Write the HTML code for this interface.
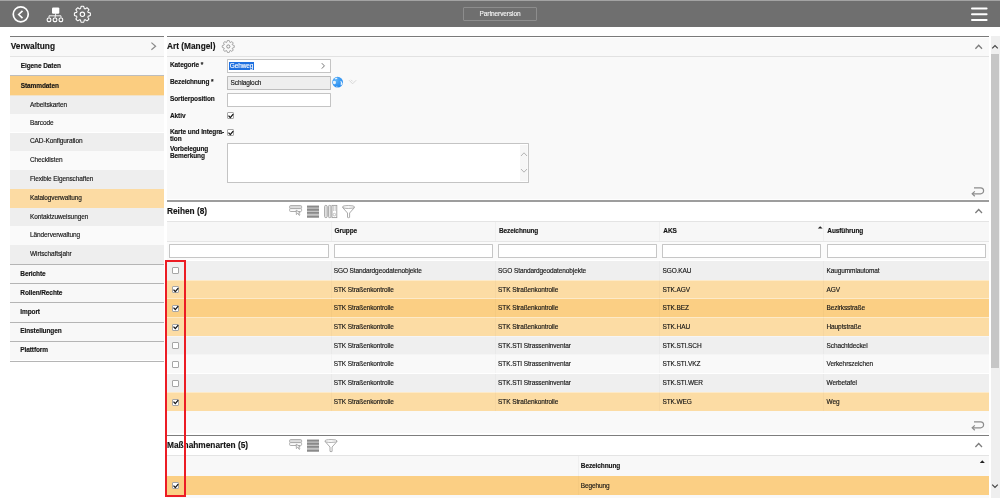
<!DOCTYPE html>
<html><head><meta charset="utf-8">
<style>
*{margin:0;padding:0;box-sizing:border-box}
html,body{width:1000px;height:498px;overflow:hidden;background:#fff;font-family:"Liberation Sans",sans-serif;color:#151515}
div,span,svg{position:absolute}
.t{white-space:nowrap;font-size:6.5px;letter-spacing:-0.1px;-webkit-text-stroke:0.14px currentColor}
.b{font-weight:bold}
.nr{left:10px;width:154px}
.inp{background:#fff;border:1px solid #c4c4c4;border-radius:0.6px}
.cb{width:7px;height:7px;border:1px solid #a6a6a6;background:#fff;border-radius:1px}
.hl{background:#7d7d7d}
</style></head><body><div id="root" style="left:0;top:0;width:1000px;height:498px;will-change:transform">
<!-- ============ top bar ============ -->
<div style="left:0;top:0;width:1000px;height:1px;background:#a3a3a3"></div>
<div style="left:0;top:1px;width:1000px;height:25.5px;background:#6f6f6f"></div>
<svg style="left:0;top:0" width="100" height="27" viewBox="0 0 100 27">
  <circle cx="20.75" cy="14.3" r="7.5" fill="none" stroke="#fff" stroke-width="1.7"/>
  <path d="M22.5 10.9 L18.7 14.5 L22.5 18.1" fill="none" stroke="#fff" stroke-width="1.6"/>
  <rect x="52" y="7.4" width="7.3" height="6.3" rx="1.2" fill="#fff"/>
  <path d="M55.6 13.5 V15.8 M49 17.5 V15.8 H61 V17.5 M55.2 15.8 V17.5" fill="none" stroke="#fff" stroke-width="0.9"/>
  <rect x="47.2" y="18" width="3.6" height="3.6" rx="1.3" fill="none" stroke="#fff" stroke-width="1.1"/>
  <rect x="53.2" y="18" width="3.6" height="3.6" rx="1.3" fill="none" stroke="#fff" stroke-width="1.1"/>
  <rect x="59.1" y="18" width="3.6" height="3.6" rx="1.3" fill="none" stroke="#fff" stroke-width="1.1"/>
  <path d="M82.40 6.30 L82.60 6.30 L82.79 6.31 L82.99 6.32 L83.18 6.34 L83.38 6.36 L83.57 6.39 L83.74 6.57 L83.87 6.93 L83.97 7.30 L84.07 7.65 L84.15 7.97 L84.23 8.26 L84.31 8.51 L84.42 8.65 L84.56 8.70 L84.70 8.76 L84.83 8.81 L84.97 8.88 L85.14 8.85 L85.37 8.74 L85.64 8.59 L85.93 8.42 L86.24 8.24 L86.57 8.06 L86.92 7.89 L87.17 7.87 L87.32 7.99 L87.48 8.12 L87.63 8.24 L87.77 8.37 L87.92 8.51 L88.06 8.64 L88.19 8.78 L88.33 8.93 L88.46 9.07 L88.58 9.22 L88.71 9.38 L88.83 9.53 L88.81 9.78 L88.64 10.13 L88.46 10.46 L88.28 10.77 L88.11 11.06 L87.96 11.33 L87.85 11.56 L87.82 11.73 L87.89 11.87 L87.94 12.00 L88.00 12.14 L88.05 12.28 L88.19 12.39 L88.44 12.47 L88.73 12.55 L89.05 12.63 L89.40 12.73 L89.77 12.83 L90.13 12.96 L90.31 13.13 L90.34 13.32 L90.36 13.52 L90.38 13.71 L90.39 13.91 L90.40 14.10 L90.40 14.30 L90.40 14.50 L90.39 14.69 L90.38 14.89 L90.36 15.08 L90.34 15.28 L90.31 15.47 L90.13 15.64 L89.77 15.77 L89.40 15.87 L89.05 15.97 L88.73 16.05 L88.44 16.13 L88.19 16.21 L88.05 16.32 L88.00 16.46 L87.94 16.60 L87.89 16.73 L87.82 16.87 L87.85 17.04 L87.96 17.27 L88.11 17.54 L88.28 17.83 L88.46 18.14 L88.64 18.47 L88.81 18.82 L88.83 19.07 L88.71 19.22 L88.58 19.38 L88.46 19.53 L88.33 19.67 L88.19 19.82 L88.06 19.96 L87.92 20.09 L87.77 20.23 L87.63 20.36 L87.48 20.48 L87.32 20.61 L87.17 20.73 L86.92 20.71 L86.57 20.54 L86.24 20.36 L85.93 20.18 L85.64 20.01 L85.37 19.86 L85.14 19.75 L84.97 19.72 L84.83 19.79 L84.70 19.84 L84.56 19.90 L84.42 19.95 L84.31 20.09 L84.23 20.34 L84.15 20.63 L84.07 20.95 L83.97 21.30 L83.87 21.67 L83.74 22.03 L83.57 22.21 L83.38 22.24 L83.18 22.26 L82.99 22.28 L82.79 22.29 L82.60 22.30 L82.40 22.30 L82.20 22.30 L82.01 22.29 L81.81 22.28 L81.62 22.26 L81.42 22.24 L81.23 22.21 L81.06 22.03 L80.93 21.67 L80.83 21.30 L80.73 20.95 L80.65 20.63 L80.57 20.34 L80.49 20.09 L80.38 19.95 L80.24 19.90 L80.10 19.84 L79.97 19.79 L79.83 19.72 L79.66 19.75 L79.43 19.86 L79.16 20.01 L78.87 20.18 L78.56 20.36 L78.23 20.54 L77.88 20.71 L77.63 20.73 L77.48 20.61 L77.32 20.48 L77.17 20.36 L77.03 20.23 L76.88 20.09 L76.74 19.96 L76.61 19.82 L76.47 19.67 L76.34 19.53 L76.22 19.38 L76.09 19.22 L75.97 19.07 L75.99 18.82 L76.16 18.47 L76.34 18.14 L76.52 17.83 L76.69 17.54 L76.84 17.27 L76.95 17.04 L76.98 16.87 L76.91 16.73 L76.86 16.60 L76.80 16.46 L76.75 16.32 L76.61 16.21 L76.36 16.13 L76.07 16.05 L75.75 15.97 L75.40 15.87 L75.03 15.77 L74.67 15.64 L74.49 15.47 L74.46 15.28 L74.44 15.08 L74.42 14.89 L74.41 14.69 L74.40 14.50 L74.40 14.30 L74.40 14.10 L74.41 13.91 L74.42 13.71 L74.44 13.52 L74.46 13.32 L74.49 13.13 L74.67 12.96 L75.03 12.83 L75.40 12.73 L75.75 12.63 L76.07 12.55 L76.36 12.47 L76.61 12.39 L76.75 12.28 L76.80 12.14 L76.86 12.00 L76.91 11.87 L76.98 11.73 L76.95 11.56 L76.84 11.33 L76.69 11.06 L76.52 10.77 L76.34 10.46 L76.16 10.13 L75.99 9.78 L75.97 9.53 L76.09 9.38 L76.22 9.22 L76.34 9.07 L76.47 8.93 L76.61 8.78 L76.74 8.64 L76.88 8.51 L77.03 8.37 L77.17 8.24 L77.32 8.12 L77.48 7.99 L77.63 7.87 L77.88 7.89 L78.23 8.06 L78.56 8.24 L78.87 8.42 L79.16 8.59 L79.43 8.74 L79.66 8.85 L79.83 8.88 L79.97 8.81 L80.10 8.76 L80.24 8.70 L80.38 8.65 L80.49 8.51 L80.57 8.26 L80.65 7.97 L80.73 7.65 L80.83 7.30 L80.93 6.93 L81.06 6.57 L81.23 6.39 L81.42 6.36 L81.62 6.34 L81.81 6.32 L82.01 6.31 L82.20 6.30Z" fill="none" stroke="#fff" stroke-width="1.1"/><circle cx="82.4" cy="14.3" r="2.2" fill="none" stroke="#fff" stroke-width="1.1"/>
</svg>
<div class="t" style="left:463px;top:7.2px;width:74px;height:13.5px;border:1px solid #8d8d8d;border-radius:1px;color:#f4f4f4;text-align:center;line-height:11.5px">Partnerversion</div>
<svg style="left:960px;top:0" width="40" height="27">
  <path d="M12 8.5 H26.6 M12 14.3 H26.6 M12 20.1 H26.6" stroke="#fff" stroke-width="2" stroke-linecap="round"/>
</svg>

<!-- ============ left nav ============ -->
<div class="nr" style="top:36px;height:1px;background:#7a7a7a"></div>
<div class="nr" style="top:37px;height:19.5px;background:#f8f8f8;border-bottom:1px solid #e3e3e3"></div>
<div class="t b" style="left:10.7px;top:38px;font-size:8.3px;letter-spacing:0;line-height:17px">Verwaltung</div>
<svg style="left:148px;top:40px" width="12" height="12"><path d="M3.4 2.6 L7.6 6.2 L3.4 9.8" fill="none" stroke="#8a8a8a" stroke-width="1.2"/></svg>

<div class="nr" style="top:56.5px;height:19px;background:#fafafa"></div>
<div class="t b" style="left:20.8px;top:56px;line-height:19px">Eigene Daten</div>
<div class="nr" style="top:75px;height:21px;background:#fbcd80;border-top:1px solid #bdbdbd;border-bottom:1px solid #f2e2c6"></div>
<div class="t b" style="left:20.8px;top:75.5px;line-height:20px">Stammdaten</div>

<div class="nr" style="top:96px;height:17.6px;background:#eeeeee"></div>
<div class="t" style="left:30px;top:95.5px;line-height:18.8px">Arbeitskarten</div>
<div class="nr" style="top:113.6px;height:18.9px;background:#fafafa"></div>
<div class="t" style="left:30px;top:113.6px;line-height:18.8px">Barcode</div>
<div class="nr" style="top:132.5px;height:18.7px;background:#eeeeee"></div>
<div class="t" style="left:30px;top:132.4px;line-height:18.8px">CAD-Konfiguration</div>
<div class="nr" style="top:151.2px;height:18.8px;background:#fafafa"></div>
<div class="t" style="left:30px;top:151.2px;line-height:18.8px">Checklisten</div>
<div class="nr" style="top:170px;height:18.8px;background:#eeeeee"></div>
<div class="t" style="left:30px;top:170px;line-height:18.8px">Flexible Eigenschaften</div>
<div class="nr" style="top:188.8px;height:18.8px;background:#fcdba3"></div>
<div class="t" style="left:30px;top:188.8px;line-height:18.8px">Katalogverwaltung</div>
<div class="nr" style="top:207.6px;height:18.6px;background:#eeeeee"></div>
<div class="t" style="left:30px;top:207.6px;line-height:18.8px">Kontaktzuweisungen</div>
<div class="nr" style="top:226.2px;height:18.6px;background:#fafafa"></div>
<div class="t" style="left:30px;top:226.2px;line-height:18.8px">Länderverwaltung</div>
<div class="nr" style="top:244.8px;height:19.2px;background:#eeeeee"></div>
<div class="t" style="left:30px;top:244.8px;line-height:18.8px">Wirtschaftsjahr</div>

<div class="nr" style="top:264px;height:1px;background:#b5b5b5"></div>
<div class="nr" style="top:265px;height:18.2px;background:#f8f8f8"></div>
<div class="t b" style="left:20.3px;top:264.5px;line-height:18.8px">Berichte</div>
<div class="nr" style="top:283.2px;height:1px;background:#b5b5b5"></div>
<div class="nr" style="top:284.2px;height:18.2px;background:#f8f8f8"></div>
<div class="t b" style="left:20.3px;top:283.6px;line-height:18.8px">Rollen/Rechte</div>
<div class="nr" style="top:302.4px;height:1px;background:#b5b5b5"></div>
<div class="nr" style="top:303.4px;height:18.9px;background:#f8f8f8"></div>
<div class="t b" style="left:20.3px;top:303px;line-height:18.8px">Import</div>
<div class="nr" style="top:322.3px;height:1px;background:#b5b5b5"></div>
<div class="nr" style="top:323.3px;height:18px;background:#f8f8f8"></div>
<div class="t b" style="left:20.3px;top:322px;line-height:18.8px">Einstellungen</div>
<div class="nr" style="top:341.3px;height:1px;background:#b5b5b5"></div>
<div class="nr" style="top:342.3px;height:18.2px;background:#f8f8f8"></div>
<div class="t b" style="left:20.3px;top:341.4px;line-height:18.8px">Plattform</div>
<div class="nr" style="top:360.5px;height:1px;background:#b5b5b5"></div>

<!-- ============ right: Art (Mangel) ============ -->
<div style="left:167px;top:36px;width:822px;height:1px;background:#7a7a7a"></div>
<div style="left:167px;top:37.6px;width:822px;height:161.4px;background:#f9f9f9"></div>
<div style="left:167px;top:55.6px;width:822px;height:1px;background:#e2e2e2"></div>
<div class="t b" style="left:167px;top:38px;font-size:8.3px;letter-spacing:0;line-height:17px">Art (Mangel)</div>
<svg style="left:215px;top:35px" width="30" height="25"><path d="M13.30 5.50 L13.45 5.50 L13.59 5.51 L13.74 5.52 L13.89 5.53 L14.03 5.55 L14.18 5.56 L14.31 5.71 L14.40 5.98 L14.48 6.25 L14.55 6.51 L14.61 6.75 L14.67 6.97 L14.73 7.16 L14.82 7.26 L14.92 7.30 L15.02 7.34 L15.12 7.39 L15.22 7.43 L15.36 7.42 L15.53 7.33 L15.73 7.22 L15.94 7.09 L16.18 6.95 L16.43 6.82 L16.69 6.69 L16.87 6.68 L16.99 6.77 L17.11 6.86 L17.22 6.96 L17.33 7.05 L17.44 7.15 L17.54 7.26 L17.65 7.36 L17.75 7.47 L17.84 7.58 L17.94 7.69 L18.03 7.81 L18.12 7.93 L18.11 8.11 L17.98 8.37 L17.85 8.62 L17.71 8.86 L17.58 9.07 L17.47 9.27 L17.38 9.44 L17.37 9.58 L17.41 9.68 L17.46 9.78 L17.50 9.88 L17.54 9.98 L17.64 10.07 L17.83 10.13 L18.05 10.19 L18.29 10.25 L18.55 10.32 L18.82 10.40 L19.09 10.49 L19.24 10.62 L19.25 10.77 L19.27 10.91 L19.28 11.06 L19.29 11.21 L19.30 11.35 L19.30 11.50 L19.30 11.65 L19.29 11.79 L19.28 11.94 L19.27 12.09 L19.25 12.23 L19.24 12.38 L19.09 12.51 L18.82 12.60 L18.55 12.68 L18.29 12.75 L18.05 12.81 L17.83 12.87 L17.64 12.93 L17.54 13.02 L17.50 13.12 L17.46 13.22 L17.41 13.32 L17.37 13.42 L17.38 13.56 L17.47 13.73 L17.58 13.93 L17.71 14.14 L17.85 14.38 L17.98 14.63 L18.11 14.89 L18.12 15.07 L18.03 15.19 L17.94 15.31 L17.84 15.42 L17.75 15.53 L17.65 15.64 L17.54 15.74 L17.44 15.85 L17.33 15.95 L17.22 16.04 L17.11 16.14 L16.99 16.23 L16.87 16.32 L16.69 16.31 L16.43 16.18 L16.18 16.05 L15.94 15.91 L15.73 15.78 L15.53 15.67 L15.36 15.58 L15.22 15.57 L15.12 15.61 L15.02 15.66 L14.92 15.70 L14.82 15.74 L14.73 15.84 L14.67 16.03 L14.61 16.25 L14.55 16.49 L14.48 16.75 L14.40 17.02 L14.31 17.29 L14.18 17.44 L14.03 17.45 L13.89 17.47 L13.74 17.48 L13.59 17.49 L13.45 17.50 L13.30 17.50 L13.15 17.50 L13.01 17.49 L12.86 17.48 L12.71 17.47 L12.57 17.45 L12.42 17.44 L12.29 17.29 L12.20 17.02 L12.12 16.75 L12.05 16.49 L11.99 16.25 L11.93 16.03 L11.87 15.84 L11.78 15.74 L11.68 15.70 L11.58 15.66 L11.48 15.61 L11.38 15.57 L11.24 15.58 L11.07 15.67 L10.87 15.78 L10.66 15.91 L10.42 16.05 L10.17 16.18 L9.91 16.31 L9.73 16.32 L9.61 16.23 L9.49 16.14 L9.38 16.04 L9.27 15.95 L9.16 15.85 L9.06 15.74 L8.95 15.64 L8.85 15.53 L8.76 15.42 L8.66 15.31 L8.57 15.19 L8.48 15.07 L8.49 14.89 L8.62 14.63 L8.75 14.38 L8.89 14.14 L9.02 13.93 L9.13 13.73 L9.22 13.56 L9.23 13.42 L9.19 13.32 L9.14 13.22 L9.10 13.12 L9.06 13.02 L8.96 12.93 L8.77 12.87 L8.55 12.81 L8.31 12.75 L8.05 12.68 L7.78 12.60 L7.51 12.51 L7.36 12.38 L7.35 12.23 L7.33 12.09 L7.32 11.94 L7.31 11.79 L7.30 11.65 L7.30 11.50 L7.30 11.35 L7.31 11.21 L7.32 11.06 L7.33 10.91 L7.35 10.77 L7.36 10.62 L7.51 10.49 L7.78 10.40 L8.05 10.32 L8.31 10.25 L8.55 10.19 L8.77 10.13 L8.96 10.07 L9.06 9.98 L9.10 9.88 L9.14 9.78 L9.19 9.68 L9.23 9.58 L9.22 9.44 L9.13 9.27 L9.02 9.07 L8.89 8.86 L8.75 8.62 L8.62 8.37 L8.49 8.11 L8.48 7.93 L8.57 7.81 L8.66 7.69 L8.76 7.58 L8.85 7.47 L8.95 7.36 L9.06 7.26 L9.16 7.15 L9.27 7.05 L9.38 6.96 L9.49 6.86 L9.61 6.77 L9.73 6.68 L9.91 6.69 L10.17 6.82 L10.42 6.95 L10.66 7.09 L10.87 7.22 L11.07 7.33 L11.24 7.42 L11.38 7.43 L11.48 7.39 L11.58 7.34 L11.68 7.30 L11.78 7.26 L11.87 7.16 L11.93 6.97 L11.99 6.75 L12.05 6.51 L12.12 6.25 L12.20 5.98 L12.29 5.71 L12.42 5.56 L12.57 5.55 L12.71 5.53 L12.86 5.52 L13.01 5.51 L13.15 5.50Z" fill="none" stroke="#8a8a8a" stroke-width="0.9"/><circle cx="13.3" cy="11.5" r="1.6" fill="none" stroke="#8a8a8a" stroke-width="0.9"/></svg>
<svg style="left:965px;top:38px" width="24" height="18"><path d="M10.4 10.8 L13.7 7.3 L17 10.8" fill="none" stroke="#7c7c7c" stroke-width="1.3"/></svg>

<div class="t b" style="left:170px;top:61px;line-height:8px">Kategorie *</div>
<div class="inp" style="left:227px;top:59px;width:104.3px;height:13.8px"></div>
<div class="t" style="left:229.4px;top:61.9px;height:8px;line-height:8px;background:#1f70e0;color:#fff;padding:0 0.3px">Gehweg</div>
<svg style="left:318px;top:60px" width="10" height="12"><path d="M3.8 3.2 L6.4 5.9 L3.8 8.6" fill="none" stroke="#666" stroke-width="0.9"/></svg>

<div class="t b" style="left:170px;top:78px;line-height:8px">Bezeichnung *</div>
<div class="inp" style="left:227px;top:76px;width:104.3px;height:13.8px;background:#eeeeee;border-color:#bdbdbd"></div>
<div class="t" style="left:230.5px;top:78.8px;line-height:8px">Schlagloch</div>
<svg style="left:330px;top:74px" width="30" height="16">
  <defs><radialGradient id="gb" cx="0.35" cy="0.3" r="0.8"><stop offset="0" stop-color="#5cb2f8"/><stop offset="1" stop-color="#1d85ee"/></radialGradient></defs>
  <circle cx="7.6" cy="8.2" r="5.4" fill="url(#gb)"/>
  <path d="M2.9 7.2 Q4.6 6.4 5.9 7.4 Q6.4 9.2 5 10.3 Q3.4 10.4 2.8 9.2Z M4.6 4.6 Q6 3.6 7.6 3.9 Q7.2 5 5.6 5.6Z M10.6 6.8 Q12.2 7.6 12.6 9.4 Q12 11 10.8 11.6 Q10.4 10 10.9 8.8 Q10.2 8 10.6 6.8Z M6.4 12.2 Q7.4 12.8 8.2 13.2 Q6.8 13.4 6.2 12.8Z" fill="#e6f2fd"/>
  <path d="M19 6.2 L22.6 9.8 L26.2 6.2 M21 5.8 L22.6 7.4" fill="none" stroke="#d4d4d4" stroke-width="0.9"/>
</svg>

<div class="t b" style="left:170px;top:95px;line-height:8px">Sortierposition</div>
<div class="inp" style="left:227px;top:93px;width:104.3px;height:13.8px"></div>

<div class="t b" style="left:170px;top:111.5px;line-height:8px">Aktiv</div>
<div class="cb" style="left:227.1px;top:112.3px"></div>
<svg style="left:225.8px;top:110.7px" width="10" height="10"><path d="M2.5 4.6 L4.3 6.6 L7.2 3.1" fill="none" stroke="#151515" stroke-width="1.3"/></svg>

<div class="t b" style="left:170px;top:128px;line-height:7px">Karte und Integra-<br>tion</div>
<div class="cb" style="left:227.3px;top:129.3px"></div>
<svg style="left:226px;top:127.7px" width="10" height="10"><path d="M2.5 4.6 L4.3 6.6 L7.2 3.1" fill="none" stroke="#151515" stroke-width="1.3"/></svg>

<div class="t b" style="left:170px;top:145px;line-height:7px">Vorbelegung<br>Bemerkung</div>
<div class="inp" style="left:227px;top:143px;width:302px;height:40px"></div>
<svg style="left:518px;top:144px" width="13" height="38">
  <rect x="2" y="1" width="7.6" height="36" fill="#f6f6f6"/>
  <path d="M3 12 L6 8.8 L9 12 M3 25 L6 28.2 L9 25" fill="none" stroke="#b4b4b4" stroke-width="1"/>
</svg>
<svg style="left:968px;top:184px" width="20" height="16">
  <path d="M6 3.8 H12.6 A3 3 0 0 1 12.6 9.8 H5" fill="none" stroke="#8c8c8c" stroke-width="1.2"/>
  <path d="M6.8 7.4 L4.2 9.8 L6.8 12.2" fill="none" stroke="#8c8c8c" stroke-width="1.2"/>
</svg>

<!-- ============ Reihen ============ -->
<div style="left:167px;top:200px;width:822px;height:2px;background:#9d9d9d"></div>
<div style="left:167px;top:202px;width:822px;height:19px;background:#ffffff"></div>
<div style="left:167px;top:221px;width:822px;height:1px;background:#e4e4e4"></div>
<div class="t b" style="left:167px;top:202.5px;font-size:8.3px;letter-spacing:0;line-height:17px">Reihen (8)</div>
<svg style="left:965px;top:202px" width="24" height="18"><path d="M10.4 11 L13.7 7.5 L17 11" fill="none" stroke="#7c7c7c" stroke-width="1.3"/></svg>
<svg style="left:285px;top:202px" width="75" height="18">
  <rect x="4.6" y="3.6" width="12" height="3" rx="1" fill="#dedede" stroke="#a3a3a3" stroke-width="0.9"/>
  <rect x="4.6" y="6.6" width="12" height="2.9" rx="1" fill="#fafafa" stroke="#a3a3a3" stroke-width="0.9"/>
  <path d="M11.2 8.2 L11.4 12.6 L12.6 11.4 L14.2 13.4 L15 12.8 L13.6 11 L15.2 10.6Z" fill="#f4f4f4" stroke="#9a9a9a" stroke-width="0.8"/>
  <rect x="22" y="3.5" width="12" height="12.4" fill="#c4c4c4"/>
  <path d="M22 4.6 H34 M22 7.8 H34 M22 10.9 H34 M22 14.6 H34" stroke="#8a8a8a" stroke-width="1.9"/>
  <rect x="39.6" y="3.4" width="2.6" height="12.2" rx="1.1" fill="#e6e6e6" stroke="#9e9e9e" stroke-width="0.9"/>
  <rect x="43.4" y="3.4" width="2.6" height="12.2" rx="1.1" fill="#e6e6e6" stroke="#9e9e9e" stroke-width="0.9"/>
  <rect x="47" y="3.4" width="4.8" height="12.2" fill="none" stroke="#9e9e9e" stroke-width="0.9"/>
  <path d="M48.6 3.6 V9 M50.2 3.6 V9" stroke="#b8b8b8" stroke-width="0.7"/>
  <circle cx="49.4" cy="12.6" r="1.3" fill="none" stroke="#aaaaaa" stroke-width="0.7"/>
  <path d="M57.5 5 Q57.5 3.6 63.6 3.6 Q69.6 3.6 69.6 5 Q69.6 6.4 63.6 6.4 Q57.5 6.4 57.5 5Z M57.5 5.4 L62.5 11 V15.4 Q63.6 16 64.6 15.4 V11 L69.6 5.4" fill="none" stroke="#a0a0a0" stroke-width="0.9"/>
</svg>

<div id="grid"></div>
<div style="left:167px;top:222px;width:821.7px;height:18.8px;background:#f7f7f7"></div>
<div style="left:167px;top:240.8px;width:821.7px;height:1px;background:#e6e6e6"></div>
<div style="left:330.5px;top:222px;width:0.6px;height:18.8px;background:#efefef"></div>
<div style="left:494.9px;top:222px;width:0.6px;height:18.8px;background:#efefef"></div>
<div style="left:659.3px;top:222px;width:0.6px;height:18.8px;background:#efefef"></div>
<div style="left:823.3px;top:222px;width:0.6px;height:18.8px;background:#efefef"></div>
<div class="t b" style="left:334.5px;top:222px;line-height:18.8px">Gruppe</div>
<div class="t b" style="left:498.9px;top:222px;line-height:18.8px">Bezeichnung</div>
<div class="t b" style="left:663.3px;top:222px;line-height:18.8px">AKS</div>
<div class="t b" style="left:827.3px;top:222px;line-height:18.8px">Ausführung</div>
<svg style="left:816px;top:224px" width="8" height="6"><path d="M1.8 4.4 L4.2 2.2 L6.6 4.4Z" fill="#222"/></svg>
<div style="left:167px;top:241.8px;width:821.7px;height:18.7px;background:#fbfbfb"></div>
<div class="inp" style="left:169px;top:244.1px;width:159.60000000000002px;height:13.7px;border-color:#c6c6c6"></div>
<div class="inp" style="left:334px;top:244.1px;width:158.5px;height:13.7px;border-color:#c6c6c6"></div>
<div class="inp" style="left:498.1px;top:244.1px;width:159.0px;height:13.7px;border-color:#c6c6c6"></div>
<div class="inp" style="left:662.3px;top:244.1px;width:159.0px;height:13.7px;border-color:#c6c6c6"></div>
<div class="inp" style="left:826.5px;top:244.1px;width:159.20000000000005px;height:13.7px;border-color:#c6c6c6"></div>
<div style="left:167px;top:260.50px;width:821.7px;height:19.5px;background:#efefef"></div>
<div style="left:330.5px;top:260.50px;width:0.6px;height:19.5px;background:rgba(0,0,0,0.025)"></div>
<div style="left:494.9px;top:260.50px;width:0.6px;height:19.5px;background:rgba(0,0,0,0.025)"></div>
<div style="left:659.3px;top:260.50px;width:0.6px;height:19.5px;background:rgba(0,0,0,0.025)"></div>
<div style="left:823.3px;top:260.50px;width:0.6px;height:19.5px;background:rgba(0,0,0,0.025)"></div>
<div class="cb" style="left:172px;top:267.00px"></div>
<div class="t" style="left:333.7px;top:261.10px;line-height:19.5px">SGO Standardgeodatenobjekte</div>
<div class="t" style="left:498.09999999999997px;top:261.10px;line-height:19.5px">SGO Standardgeodatenobjekte</div>
<div class="t" style="left:662.5px;top:261.10px;line-height:19.5px">SGO.KAU</div>
<div class="t" style="left:826.5px;top:261.10px;line-height:19.5px">Kaugummiautomat</div>
<div style="left:167px;top:280.00px;width:821.7px;height:18.7px;background:#fcdca4"></div>
<div style="left:167px;top:279.50px;width:821.7px;height:1px;background:rgba(255,255,255,0.4)"></div>
<div style="left:330.5px;top:280.00px;width:0.6px;height:18.7px;background:rgba(0,0,0,0.025)"></div>
<div style="left:494.9px;top:280.00px;width:0.6px;height:18.7px;background:rgba(0,0,0,0.025)"></div>
<div style="left:659.3px;top:280.00px;width:0.6px;height:18.7px;background:rgba(0,0,0,0.025)"></div>
<div style="left:823.3px;top:280.00px;width:0.6px;height:18.7px;background:rgba(0,0,0,0.025)"></div>
<div class="cb" style="left:172px;top:286.30px"></div>
<svg style="left:170.7px;top:284.70px" width="10" height="10"><path d="M2.5 4.6 L4.3 6.6 L7.2 3.1" fill="none" stroke="#151515" stroke-width="1.3"/></svg>
<div class="t" style="left:333.7px;top:280.60px;line-height:18.7px">STK Straßenkontrolle</div>
<div class="t" style="left:498.09999999999997px;top:280.60px;line-height:18.7px">STK Straßenkontrolle</div>
<div class="t" style="left:662.5px;top:280.60px;line-height:18.7px">STK.AGV</div>
<div class="t" style="left:826.5px;top:280.60px;line-height:18.7px">AGV</div>
<div style="left:167px;top:298.70px;width:821.7px;height:18.7px;background:#fbcf84"></div>
<div style="left:167px;top:298.20px;width:821.7px;height:1px;background:rgba(255,255,255,0.4)"></div>
<div style="left:330.5px;top:298.70px;width:0.6px;height:18.7px;background:rgba(0,0,0,0.025)"></div>
<div style="left:494.9px;top:298.70px;width:0.6px;height:18.7px;background:rgba(0,0,0,0.025)"></div>
<div style="left:659.3px;top:298.70px;width:0.6px;height:18.7px;background:rgba(0,0,0,0.025)"></div>
<div style="left:823.3px;top:298.70px;width:0.6px;height:18.7px;background:rgba(0,0,0,0.025)"></div>
<div class="cb" style="left:172px;top:305.00px"></div>
<svg style="left:170.7px;top:303.40px" width="10" height="10"><path d="M2.5 4.6 L4.3 6.6 L7.2 3.1" fill="none" stroke="#151515" stroke-width="1.3"/></svg>
<div class="t" style="left:333.7px;top:299.30px;line-height:18.7px">STK Straßenkontrolle</div>
<div class="t" style="left:498.09999999999997px;top:299.30px;line-height:18.7px">STK Straßenkontrolle</div>
<div class="t" style="left:662.5px;top:299.30px;line-height:18.7px">STK.BEZ</div>
<div class="t" style="left:826.5px;top:299.30px;line-height:18.7px">Bezirksstraße</div>
<div style="left:167px;top:317.40px;width:821.7px;height:18.7px;background:#fcdca4"></div>
<div style="left:167px;top:316.90px;width:821.7px;height:1px;background:rgba(255,255,255,0.4)"></div>
<div style="left:330.5px;top:317.40px;width:0.6px;height:18.7px;background:rgba(0,0,0,0.025)"></div>
<div style="left:494.9px;top:317.40px;width:0.6px;height:18.7px;background:rgba(0,0,0,0.025)"></div>
<div style="left:659.3px;top:317.40px;width:0.6px;height:18.7px;background:rgba(0,0,0,0.025)"></div>
<div style="left:823.3px;top:317.40px;width:0.6px;height:18.7px;background:rgba(0,0,0,0.025)"></div>
<div class="cb" style="left:172px;top:323.70px"></div>
<svg style="left:170.7px;top:322.10px" width="10" height="10"><path d="M2.5 4.6 L4.3 6.6 L7.2 3.1" fill="none" stroke="#151515" stroke-width="1.3"/></svg>
<div class="t" style="left:333.7px;top:318.00px;line-height:18.7px">STK Straßenkontrolle</div>
<div class="t" style="left:498.09999999999997px;top:318.00px;line-height:18.7px">STK Straßenkontrolle</div>
<div class="t" style="left:662.5px;top:318.00px;line-height:18.7px">STK.HAU</div>
<div class="t" style="left:826.5px;top:318.00px;line-height:18.7px">Hauptstraße</div>
<div style="left:167px;top:336.10px;width:821.7px;height:18.7px;background:#efefef"></div>
<div style="left:167px;top:335.60px;width:821.7px;height:1px;background:rgba(255,255,255,0.4)"></div>
<div style="left:330.5px;top:336.10px;width:0.6px;height:18.7px;background:rgba(0,0,0,0.025)"></div>
<div style="left:494.9px;top:336.10px;width:0.6px;height:18.7px;background:rgba(0,0,0,0.025)"></div>
<div style="left:659.3px;top:336.10px;width:0.6px;height:18.7px;background:rgba(0,0,0,0.025)"></div>
<div style="left:823.3px;top:336.10px;width:0.6px;height:18.7px;background:rgba(0,0,0,0.025)"></div>
<div class="cb" style="left:172px;top:342.40px"></div>
<div class="t" style="left:333.7px;top:336.70px;line-height:18.7px">STK Straßenkontrolle</div>
<div class="t" style="left:498.09999999999997px;top:336.70px;line-height:18.7px">STK.STI Strasseninventar</div>
<div class="t" style="left:662.5px;top:336.70px;line-height:18.7px">STK.STI.SCH</div>
<div class="t" style="left:826.5px;top:336.70px;line-height:18.7px">Schachtdeckel</div>
<div style="left:167px;top:354.80px;width:821.7px;height:18.7px;background:#f9f9f9"></div>
<div style="left:167px;top:354.30px;width:821.7px;height:1px;background:rgba(255,255,255,0.4)"></div>
<div style="left:330.5px;top:354.80px;width:0.6px;height:18.7px;background:rgba(0,0,0,0.025)"></div>
<div style="left:494.9px;top:354.80px;width:0.6px;height:18.7px;background:rgba(0,0,0,0.025)"></div>
<div style="left:659.3px;top:354.80px;width:0.6px;height:18.7px;background:rgba(0,0,0,0.025)"></div>
<div style="left:823.3px;top:354.80px;width:0.6px;height:18.7px;background:rgba(0,0,0,0.025)"></div>
<div class="cb" style="left:172px;top:361.10px"></div>
<div class="t" style="left:333.7px;top:355.40px;line-height:18.7px">STK Straßenkontrolle</div>
<div class="t" style="left:498.09999999999997px;top:355.40px;line-height:18.7px">STK.STI Strasseninventar</div>
<div class="t" style="left:662.5px;top:355.40px;line-height:18.7px">STK.STI.VKZ</div>
<div class="t" style="left:826.5px;top:355.40px;line-height:18.7px">Verkehrszeichen</div>
<div style="left:167px;top:373.50px;width:821.7px;height:18.7px;background:#efefef"></div>
<div style="left:167px;top:373.00px;width:821.7px;height:1px;background:rgba(255,255,255,0.4)"></div>
<div style="left:330.5px;top:373.50px;width:0.6px;height:18.7px;background:rgba(0,0,0,0.025)"></div>
<div style="left:494.9px;top:373.50px;width:0.6px;height:18.7px;background:rgba(0,0,0,0.025)"></div>
<div style="left:659.3px;top:373.50px;width:0.6px;height:18.7px;background:rgba(0,0,0,0.025)"></div>
<div style="left:823.3px;top:373.50px;width:0.6px;height:18.7px;background:rgba(0,0,0,0.025)"></div>
<div class="cb" style="left:172px;top:379.80px"></div>
<div class="t" style="left:333.7px;top:374.10px;line-height:18.7px">STK Straßenkontrolle</div>
<div class="t" style="left:498.09999999999997px;top:374.10px;line-height:18.7px">STK.STI Strasseninventar</div>
<div class="t" style="left:662.5px;top:374.10px;line-height:18.7px">STK.STI.WER</div>
<div class="t" style="left:826.5px;top:374.10px;line-height:18.7px">Werbetafel</div>
<div style="left:167px;top:392.20px;width:821.7px;height:18.7px;background:#fcdca4"></div>
<div style="left:167px;top:391.70px;width:821.7px;height:1px;background:rgba(255,255,255,0.4)"></div>
<div style="left:330.5px;top:392.20px;width:0.6px;height:18.7px;background:rgba(0,0,0,0.025)"></div>
<div style="left:494.9px;top:392.20px;width:0.6px;height:18.7px;background:rgba(0,0,0,0.025)"></div>
<div style="left:659.3px;top:392.20px;width:0.6px;height:18.7px;background:rgba(0,0,0,0.025)"></div>
<div style="left:823.3px;top:392.20px;width:0.6px;height:18.7px;background:rgba(0,0,0,0.025)"></div>
<div class="cb" style="left:172px;top:398.50px"></div>
<svg style="left:170.7px;top:396.90px" width="10" height="10"><path d="M2.5 4.6 L4.3 6.6 L7.2 3.1" fill="none" stroke="#151515" stroke-width="1.3"/></svg>
<div class="t" style="left:333.7px;top:392.80px;line-height:18.7px">STK Straßenkontrolle</div>
<div class="t" style="left:498.09999999999997px;top:392.80px;line-height:18.7px">STK Straßenkontrolle</div>
<div class="t" style="left:662.5px;top:392.80px;line-height:18.7px">STK.WEG</div>
<div class="t" style="left:826.5px;top:392.80px;line-height:18.7px">Weg</div>
<!-- /grid -->

<!-- ============ Maßnahmenarten ============ -->
<!-- reihen footer -->
<div style="left:167px;top:411.4px;width:821.7px;height:21.6px;background:#f9f9f9"></div>
<svg style="left:968px;top:418px" width="20" height="16">
  <path d="M6 3.8 H12.6 A3 3 0 0 1 12.6 9.8 H5" fill="none" stroke="#8c8c8c" stroke-width="1.2"/>
  <path d="M6.8 7.4 L4.2 9.8 L6.8 12.2" fill="none" stroke="#8c8c8c" stroke-width="1.2"/>
</svg>
<div style="left:167px;top:434.8px;width:821.7px;height:1.2px;background:#7d7d7d"></div>
<div style="left:167px;top:436px;width:821.7px;height:19px;background:#fff"></div>
<div style="left:167px;top:455px;width:821.7px;height:1px;background:#e4e4e4"></div>
<div class="t b" style="left:167px;top:436.5px;font-size:8.3px;letter-spacing:0;line-height:17px">Maßnahmenarten (5)</div>
<svg style="left:965px;top:436px" width="24" height="18"><path d="M10.4 11 L13.7 7.5 L17 11" fill="none" stroke="#7c7c7c" stroke-width="1.3"/></svg>
<svg style="left:285px;top:436px" width="75" height="18">
  <rect x="4.6" y="3.6" width="12" height="3" rx="1" fill="#dedede" stroke="#a3a3a3" stroke-width="0.9"/>
  <rect x="4.6" y="6.6" width="12" height="2.9" rx="1" fill="#fafafa" stroke="#a3a3a3" stroke-width="0.9"/>
  <path d="M11.2 8.2 L11.4 12.6 L12.6 11.4 L14.2 13.4 L15 12.8 L13.6 11 L15.2 10.6Z" fill="#f4f4f4" stroke="#9a9a9a" stroke-width="0.8"/>
  <rect x="22" y="3.5" width="12" height="12.4" fill="#c4c4c4"/>
  <path d="M22 4.6 H34 M22 7.8 H34 M22 10.9 H34 M22 14.6 H34" stroke="#8a8a8a" stroke-width="1.9"/>
  <path d="M40 5 Q40 3.6 46.1 3.6 Q52.1 3.6 52.1 5 Q52.1 6.4 46.1 6.4 Q40 6.4 40 5Z M40 5.4 L45 11 V15.4 Q46.1 16 47.1 15.4 V11 L52.1 5.4" fill="none" stroke="#a0a0a0" stroke-width="0.9"/>
</svg>
<div style="left:167px;top:456px;width:821.7px;height:19.6px;background:#f8f8f8"></div>
<div style="left:578px;top:456px;width:0.6px;height:19.6px;background:#efefef"></div>
<div class="t b" style="left:580.8px;top:456px;line-height:19.6px">Bezeichnung</div>
<svg style="left:977px;top:457px" width="10" height="7"><path d="M2.8 5.9 L5.3 3.2 L7.8 5.9Z" fill="#222"/></svg>
<div style="left:167px;top:475.6px;width:821.7px;height:19.2px;background:#fbcf84"></div>
<div style="left:578px;top:475.6px;width:0.6px;height:19.2px;background:rgba(0,0,0,0.025)"></div>
<div class="cb" style="left:172px;top:482.2px"></div>
<svg style="left:170.7px;top:480.6px" width="10" height="10"><path d="M2.5 4.6 L4.3 6.6 L7.2 3.1" fill="none" stroke="#151515" stroke-width="1.3"/></svg>
<div class="t" style="left:580.8px;top:475.6px;line-height:19.2px">Begehung</div>
<div style="left:167px;top:494.8px;width:821.7px;height:4px;background:#f9f9f9"></div>

<!-- red box -->
<div style="left:165px;top:260px;width:21px;height:237px;border:2px solid #ec1c24"></div>

<!-- scrollbar -->
<div style="left:991px;top:36px;width:8.5px;height:462px;background:#efefef"></div>
<div style="left:991px;top:54px;width:7.7px;height:314px;background:#c6c6c6"></div>
<svg style="left:990px;top:40px" width="10" height="12"><path d="M2.2 8.4 L5 5.6 L7.8 8.4" fill="none" stroke="#444" stroke-width="1.2"/></svg>
<svg style="left:990px;top:480px" width="10" height="12"><path d="M2.2 4.6 L5 7.4 L7.8 4.6" fill="none" stroke="#444" stroke-width="1.2"/></svg>


</div></body></html>
